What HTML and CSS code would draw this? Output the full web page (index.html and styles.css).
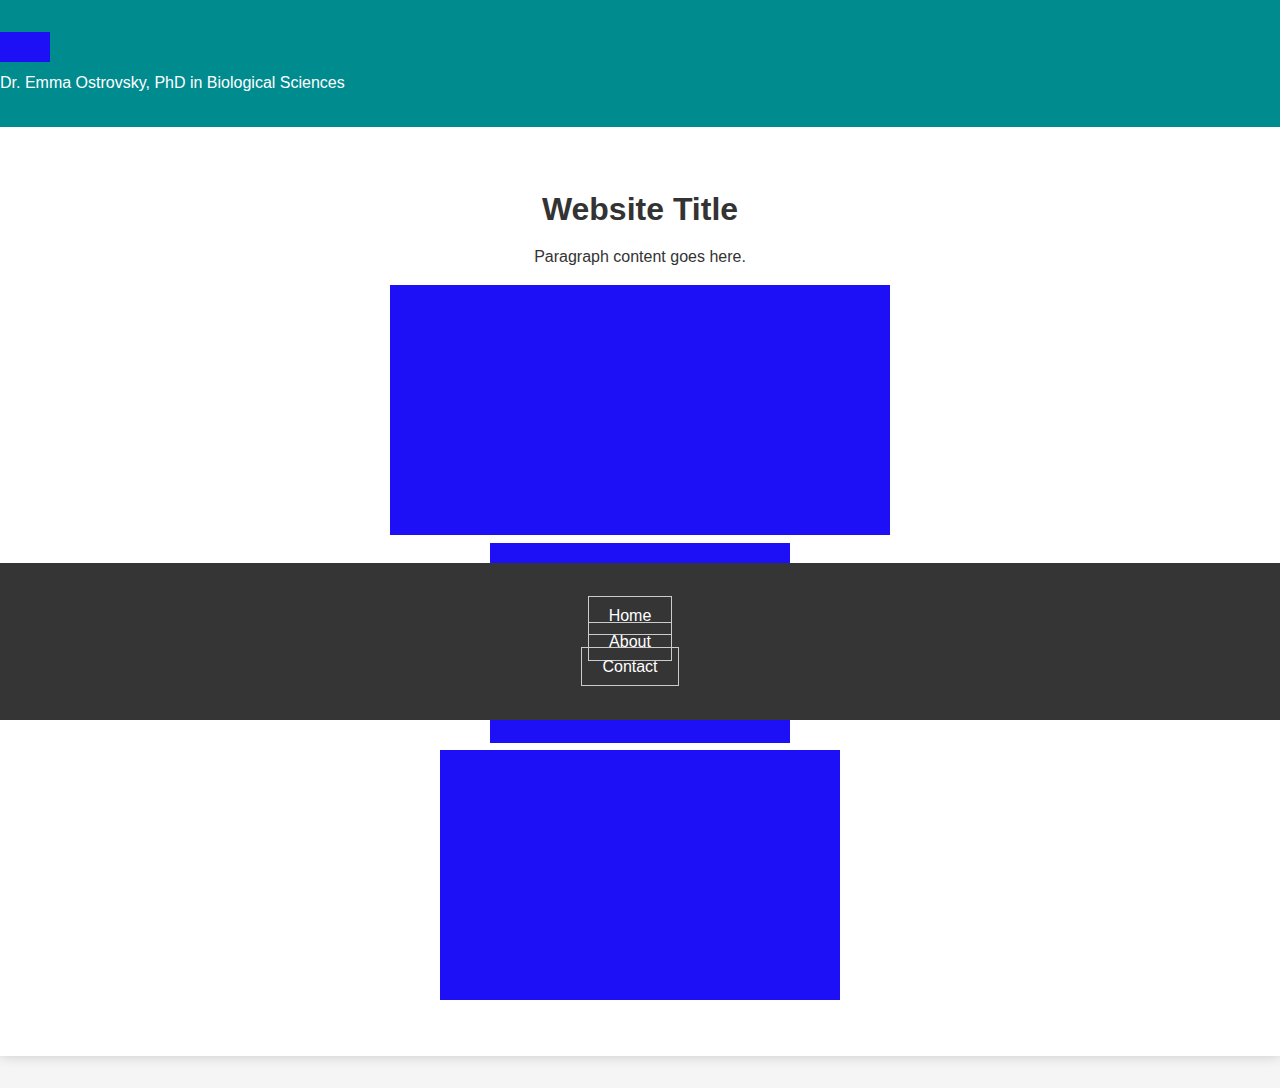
FILE: index.html
```html
<!DOCTYPE html>
<html lang="en">
<head>
<meta charset="utf-8">
<title>Website Title</title>
<link rel="stylesheet" href="styles.css">
</head>
<body>
<div class="page">
  <header class="site-header">
    <div class="logo"></div>
    <p class="byline">Dr. Emma Ostrovsky, PhD in Biological Sciences</p>
  </header>
  <main class="content">
    <h1 class="title">Website Title</h1>
    <p class="lead">Paragraph content goes here.</p>
    <div class="gallery">
      <div class="pic pic-1"></div>
      <div class="pic pic-2"></div>
      <div class="pic pic-3"></div>
    </div>
  </main>
  <footer class="site-footer">
    <ul class="nav">
      <li><a href="#">Home</a></li>
      <li><a href="#">About</a></li>
      <li><a href="#">Contact</a></li>
    </ul>
  </footer>
</div>
</body>
</html>
```

FILE: styles.css
```css
html, body {
  margin: 0;
  padding: 0;
}
body {
  background: #f5f5f5;
  font-family: "Liberation Sans", Arial, sans-serif;
  color: #333333;
}
.page {
  position: relative;
  background: #ffffff;
  box-shadow: 0 0 12px rgba(0, 0, 0, 0.18);
  margin-bottom: 32px;
}
.site-header {
  background: #008b8f;
  padding: 32px 0 35px;
  color: #ffffff;
}
.logo {
  width: 50px;
  height: 30px;
  background: #1d10f6;
  margin-bottom: 12px;
}
.byline {
  margin: 0;
  font-size: 16px;
  line-height: 18px;
}
.content {
  padding: 64px 0 56px;
  text-align: center;
}
.title {
  margin: 0 0 20px;
  font-size: 32px;
  line-height: 37px;
  font-weight: bold;
  color: #333333;
}
.lead {
  margin: 0 0 19px;
  font-size: 16px;
  line-height: 18px;
}
.gallery {
  display: flex;
  flex-direction: column;
  align-items: center;
}
.pic {
  background: #1d10f6;
}
.pic-1 {
  width: 500px;
  height: 250px;
}
.pic-2 {
  width: 300px;
  height: 200px;
  margin-top: 8px;
}
.pic-3 {
  width: 400px;
  height: 250px;
  margin-top: 7px;
}
.site-footer {
  position: absolute;
  left: 0;
  right: 0;
  top: 563px;
  height: 157px;
  box-sizing: border-box;
  padding: 40px 0;
  background: #353535;
}
.nav {
  list-style: none;
  margin: 0;
  padding: 0 20px 0 0;
  text-align: center;
}
.nav li {
  display: block;
  line-height: 25.6px;
  font-size: 16px;
}
.nav a {
  color: #ffffff;
  text-decoration: none;
  padding: 10px 20px;
  border: 1px solid #cccccc;
}
```
